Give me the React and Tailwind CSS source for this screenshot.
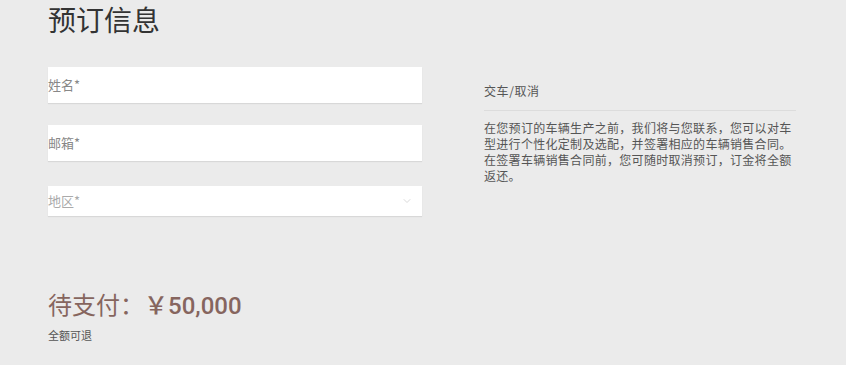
import React from 'react';
import { ChevronDown } from 'lucide-react';

const FONT = '"Noto Sans CJK SC", "Noto Sans", sans-serif';

function Field({ label, select }) {
  return (
    <div
      className={`flex items-center justify-between bg-white shadow-[0_1px_1px_rgba(0,0,0,0.08)] ${select ? 'h-[30px]' : 'h-[36px]'}`}
    >
      <span className={`text-[13px] ${select ? 'text-[#aaa]' : 'text-[#888]'}`}>{label}</span>
      {select && <ChevronDown className="w-3 h-3 mr-[9px] text-[#ccc]" strokeWidth={1.5} />}
    </div>
  );
}

export default function App() {
  return (
    <div className="w-[846px] h-[365px] bg-[#ebebeb] overflow-hidden" style={{ fontFamily: FONT }}>
      <div className="pl-[48px]">
        <h1 className="text-[28px] leading-[38px] text-[#333] font-normal">预订信息</h1>

        <div className="flex mt-[29px]">
          {/* Form */}
          <div className="w-[374px] flex flex-col">
            <Field label="姓名*" />
            <div className="h-[22px]" />
            <Field label="邮箱*" />
            <div className="h-[25px]" />
            <Field label="地区*" select />
          </div>

          {/* Notes */}
          <div className="ml-[62px] w-[312px] pt-[16px]">
            <div className="text-[12px] leading-[16px] tracking-[0.6px] text-[#555] pb-[11px] border-b border-[#dcdcdc]">交车/取消</div>
            <p className="mt-[9px] text-[12px] leading-[16px] tracking-[0.3px] text-[#555]">
              在您预订的车辆生产之前，我们将与您联系，您可以对车型进行个性化定制及选配，并签署相应的车辆销售合同。在签署车辆销售合同前，您可随时取消预订，订金将全额返还。
            </p>
          </div>
        </div>

        <div className="mt-[73px] text-[24px] leading-[30px] text-[#86655e]">
          待支付：<span className="font-medium" style={{ fontFamily: 'Roboto, "Noto Sans CJK SC", sans-serif' }}>￥50,000</span>
        </div>
        <div className="mt-[7px] text-[11px] leading-[14px] text-[#555]">全额可退</div>
      </div>
    </div>
  );
}
